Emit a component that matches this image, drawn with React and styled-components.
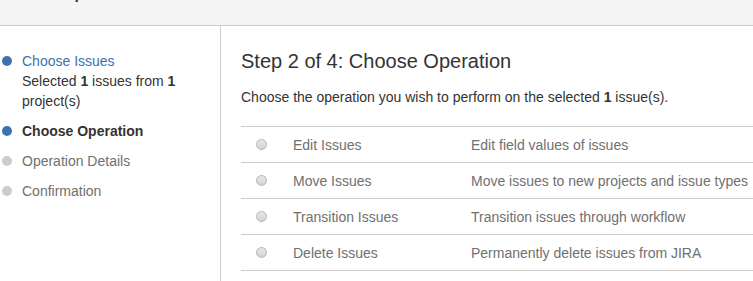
import styled, { createGlobalStyle } from 'styled-components'

const Global = createGlobalStyle`
  body {
    margin: 0;
    background: #fff;
    font-family: Arial, "Liberation Sans", sans-serif;
    font-size: 14px;
    color: #333;
  }
`

const TopBar = styled.header`
  height: 25px;
  background: #f4f4f4;
  border-bottom: 1px solid #ccc;
  overflow: hidden;
  padding-left: 2px;
`

const PageTitle = styled.h1`
  margin: -23px 0 0;
  font-size: 24px;
  line-height: 24px;
  font-weight: normal;
  color: #333;
`

const Layout = styled.div`
  display: grid;
  grid-template-columns: 221px 1fr;
  height: 255px;
`

const Sidebar = styled.ul`
  list-style: none;
  margin: 0;
  padding: 25px 0 0 2px;
  border-right: 1px solid #ccc;
`

const Step = styled.li`
  display: grid;
  grid-template-columns: 10px 1fr;
  column-gap: 10px;
  line-height: 20px;
  margin-bottom: 10px;
  color: ${({ state }) => (state === 'done' ? '#3b73af' : state === 'current' ? '#333' : '#707070')};
  font-weight: ${({ state }) => (state === 'current' ? 'bold' : 'normal')};
`

const Dot = styled.span`
  width: 10px;
  height: 10px;
  border-radius: 50%;
  margin-top: 5px;
  background: ${({ active }) => (active ? '#3b73af' : '#ccc')};
`

const Summary = styled.div`
  color: #333;
`

const Main = styled.main`
  padding: 23px 0 0 20px;
  overflow: hidden;
`

const Heading = styled.h2`
  margin: 0 0 14px;
  font-size: 20px;
  line-height: 24px;
  font-weight: normal;
  color: #333;
`

const Intro = styled.p`
  margin: 0 0 19px;
  line-height: 20px;
`

const Options = styled.div`
  border-bottom: 1px solid #ccc;
  width: 540px;
`

const Option = styled.label`
  display: grid;
  grid-template-columns: 52px 178px 1fr;
  align-items: center;
  height: 35px;
  border-top: 1px solid #ccc;
  color: #707070;
  white-space: nowrap;
`

const Radio = styled.span`
  width: 9px;
  height: 9px;
  margin-left: 15px;
  border-radius: 50%;
  border: 1px solid #b5b5b5;
  background: linear-gradient(#e6e6e6, #d4d4d4);
`

const steps = [
  { label: 'Choose Issues', state: 'done' },
  { label: 'Choose Operation', state: 'current' },
  { label: 'Operation Details', state: 'todo' },
  { label: 'Confirmation', state: 'todo' },
]

const operations = [
  ['Edit Issues', 'Edit field values of issues'],
  ['Move Issues', 'Move issues to new projects and issue types'],
  ['Transition Issues', 'Transition issues through workflow'],
  ['Delete Issues', 'Permanently delete issues from JIRA'],
]

export default function App() {
  return (
    <>
      <Global />
      <TopBar>
        <PageTitle>Bulk Operation</PageTitle>
      </TopBar>
      <Layout>
        <Sidebar>
          {steps.map((s) => (
            <Step key={s.label} state={s.state}>
              <Dot active={s.state !== 'todo'} />
              <div>
                {s.label}
                {s.state === 'done' && (
                  <Summary>
                    Selected <b>1</b> issues from <b>1</b> project(s)
                  </Summary>
                )}
              </div>
            </Step>
          ))}
        </Sidebar>
        <Main>
          <Heading>Step 2 of 4: Choose Operation</Heading>
          <Intro>
            Choose the operation you wish to perform on the selected <b>1</b> issue(s).
          </Intro>
          <Options>
            {operations.map(([name, desc]) => (
              <Option key={name}>
                <Radio />
                <span>{name}</span>
                <span>{desc}</span>
              </Option>
            ))}
          </Options>
        </Main>
      </Layout>
    </>
  )
}
